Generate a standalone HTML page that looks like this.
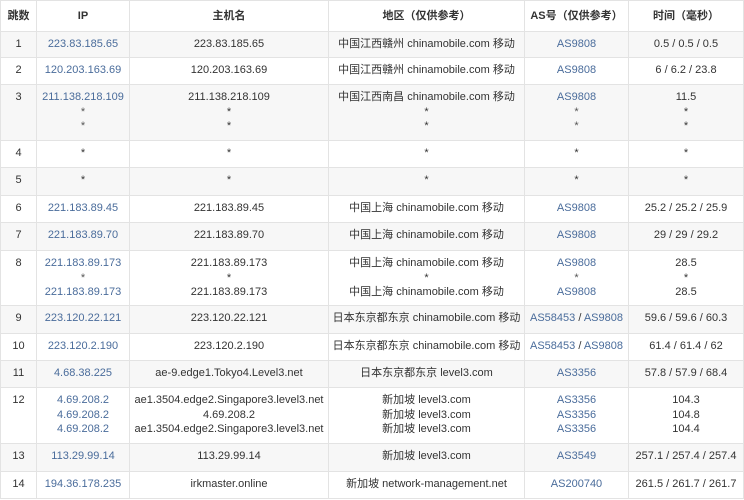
<!DOCTYPE html><html><head><meta charset="utf-8"><style>
body{margin:0;background:#fff;width:744px;height:500px;overflow:hidden;font-family:"Liberation Sans","Noto Sans CJK SC",sans-serif;font-size:11px;color:#333}
table{border-collapse:collapse;table-layout:fixed;width:743px;position:absolute;left:0;top:0}
td,th{border:1px solid #e3e3e3;text-align:center;vertical-align:top;padding:5px 0 0 0;line-height:14.5px;white-space:nowrap;overflow:hidden}
th{font-weight:bold;padding-top:8px;color:#333}
tr.g td{background:#f7f7f7}
.l{color:#4a6c9b}
.s{color:#555}
</style></head><body><table>
<colgroup><col style="width:36px"><col style="width:93px"><col style="width:199px"><col style="width:196px"><col style="width:104px"><col style="width:115px"></colgroup>
<tr style="height:31px"><th>跳数</th><th>IP</th><th>主机名</th><th>地区（仅供参考）</th><th>AS号（仅供参考）</th><th>时间（毫秒）</th></tr>
<tr class="g" style="height:26px"><td>1</td><td class="l">223.83.185.65</td><td>223.83.185.65</td><td>中国江西赣州 chinamobile.com 移动</td><td class="l">AS9808</td><td>0.5 / 0.5 / 0.5</td></tr>
<tr style="height:27px"><td>2</td><td class="l">120.203.163.69</td><td>120.203.163.69</td><td>中国江西赣州 chinamobile.com 移动</td><td class="l">AS9808</td><td>6 / 6.2 / 23.8</td></tr>
<tr class="g" style="height:56px"><td>3</td><td class="l">211.138.218.109<br><span class="s">*<br>*</span></td><td>211.138.218.109<br>*<br>*</td><td>中国江西南昌 chinamobile.com 移动<br>*<br>*</td><td class="l">AS9808<br><span class="s">*<br>*</span></td><td>11.5<br>*<br>*</td></tr>
<tr style="height:27px"><td>4</td><td>*</td><td>*</td><td>*</td><td>*</td><td>*</td></tr>
<tr class="g" style="height:28px"><td>5</td><td>*</td><td>*</td><td>*</td><td>*</td><td>*</td></tr>
<tr style="height:27px"><td>6</td><td class="l">221.183.89.45</td><td>221.183.89.45</td><td>中国上海 chinamobile.com 移动</td><td class="l">AS9808</td><td>25.2 / 25.2 / 25.9</td></tr>
<tr class="g" style="height:28px"><td>7</td><td class="l">221.183.89.70</td><td>221.183.89.70</td><td>中国上海 chinamobile.com 移动</td><td class="l">AS9808</td><td>29 / 29 / 29.2</td></tr>
<tr style="height:55px"><td>8</td><td class="l">221.183.89.173<br><span class="s">*</span><br>221.183.89.173</td><td>221.183.89.173<br>*<br>221.183.89.173</td><td>中国上海 chinamobile.com 移动<br>*<br>中国上海 chinamobile.com 移动</td><td class="l">AS9808<br><span class="s">*</span><br>AS9808</td><td>28.5<br>*<br>28.5</td></tr>
<tr class="g" style="height:28px"><td>9</td><td class="l">223.120.22.121</td><td>223.120.22.121</td><td>日本东京都东京 chinamobile.com 移动</td><td class="l">AS58453 <span style="color:#333">/</span> AS9808</td><td>59.6 / 59.6 / 60.3</td></tr>
<tr style="height:27px"><td>10</td><td class="l">223.120.2.190</td><td>223.120.2.190</td><td>日本东京都东京 chinamobile.com 移动</td><td class="l">AS58453 <span style="color:#333">/</span> AS9808</td><td>61.4 / 61.4 / 62</td></tr>
<tr class="g" style="height:27px"><td>11</td><td class="l">4.68.38.225</td><td>ae-9.edge1.Tokyo4.Level3.net</td><td>日本东京都东京 level3.com</td><td class="l">AS3356</td><td>57.8 / 57.9 / 68.4</td></tr>
<tr style="height:56px"><td>12</td><td class="l">4.69.208.2<br>4.69.208.2<br>4.69.208.2</td><td>ae1.3504.edge2.Singapore3.level3.net<br>4.69.208.2<br>ae1.3504.edge2.Singapore3.level3.net</td><td>新加坡 level3.com<br>新加坡 level3.com<br>新加坡 level3.com</td><td class="l">AS3356<br>AS3356<br>AS3356</td><td>104.3<br>104.8<br>104.4</td></tr>
<tr class="g" style="height:28px"><td>13</td><td class="l">113.29.99.14</td><td>113.29.99.14</td><td>新加坡 level3.com</td><td class="l">AS3549</td><td>257.1 / 257.4 / 257.4</td></tr>
<tr style="height:27px"><td>14</td><td class="l">194.36.178.235</td><td>irkmaster.online</td><td>新加坡 network-management.net</td><td class="l">AS200740</td><td>261.5 / 261.7 / 261.7</td></tr>
</table></body></html>
